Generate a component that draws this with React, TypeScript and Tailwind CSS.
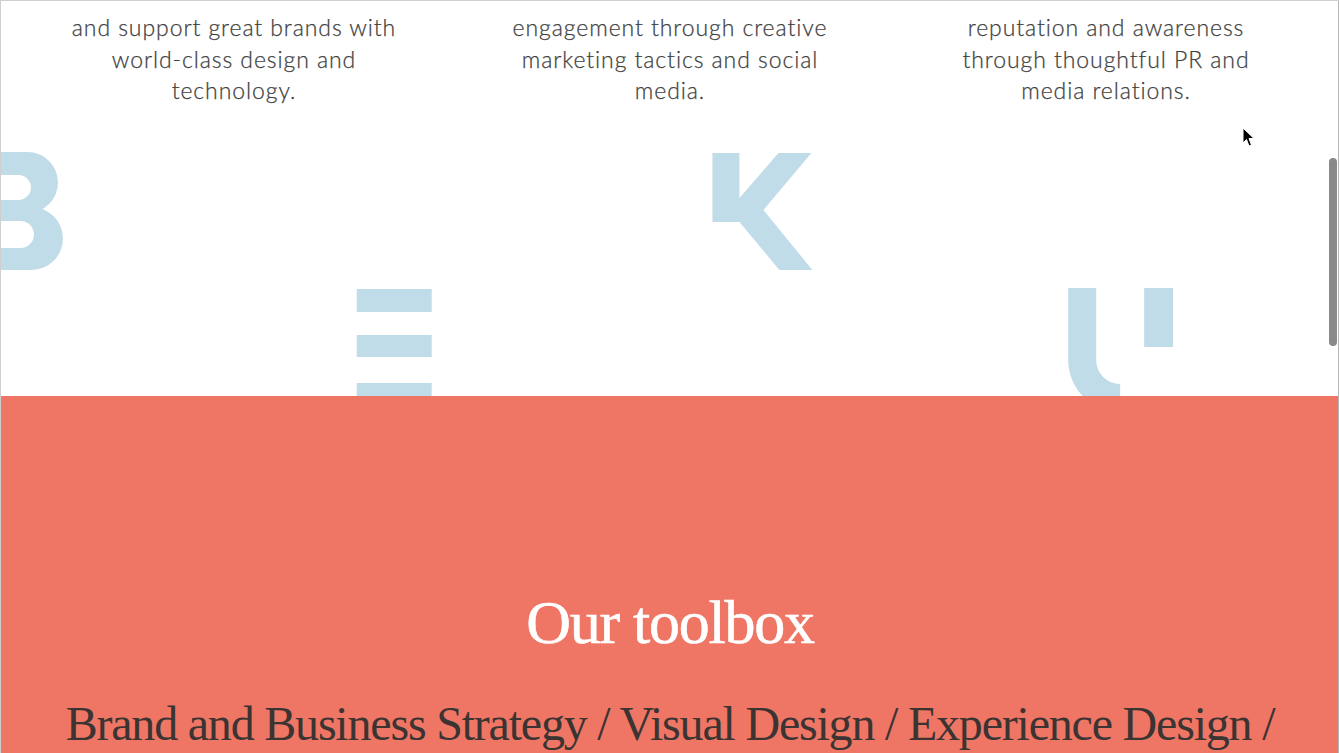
const COLUMNS = [
  ['and support great brands with', 'world-class design and', 'technology.'],
  ['engagement through creative', 'marketing tactics and social', 'media.'],
  ['reputation and awareness', 'through thoughtful PR and', 'media relations.'],
];

const BLUE = '#c0dce9';

function Letters() {
  // viewBox uses page coordinates (top of svg sits at y=110)
  return (
    <svg className="block w-full h-[286px] shrink-0" viewBox="0 110 1339 286" preserveAspectRatio="none">
      {/* B, left part outside the page */}
      <path d="M-40 152 H26.5 A30.5 30.5 0 0 1 26.5 213 H-40 Z" fill={BLUE} />
      <path d="M-40 207 H30.5 A31.5 31.5 0 0 1 30.5 270 H-40 Z" fill={BLUE} />
      <path d="M-10 175 H17.5 A12.5 12.5 0 0 1 17.5 200 H-10 Z" fill="#fff" />
      <path d="M-10 221 H19.5 A13.5 13.5 0 0 1 19.5 248 H-10 Z" fill="#fff" />
      {/* E bars */}
      <rect x="356" y="289" width="75" height="23" fill={BLUE} />
      <rect x="356" y="335" width="75" height="22" fill={BLUE} />
      <rect x="356" y="383" width="75" height="22" fill={BLUE} />
      {/* K */}
      <polygon
        points="712,153 739,153 739,198 778,153 811,153 763,210 812,270 779,270 739,222 712,222"
        fill={BLUE}
      />
      {/* U */}
      <path d="M1068 288 H1096 V360 A24 24 0 0 0 1120 384 V412 A52 52 0 0 1 1068 360 Z" fill={BLUE} />
      <rect x="1144" y="288" width="29" height="59" fill={BLUE} />
    </svg>
  );
}

export default function App() {
  return (
    <div className="relative h-[753px] w-full overflow-hidden bg-white border-t border-l border-[#cfcfcf]">
      <section className="h-[395px] flex flex-col overflow-hidden">
        <div className="h-[109px] w-[1308px] mx-auto grid grid-cols-3 pt-[11px] shrink-0">
          {COLUMNS.map((lines, i) => (
            <p
              key={i}
              className="text-center text-[23px] font-light leading-[31.5px] text-[#3f3f3f] tracking-[0.04em] [-webkit-text-stroke:0.25px_#3f3f3f]"
              style={{ fontFamily: 'Lato, "Open Sans", sans-serif' }}
            >
              {lines.map((l) => (
                <span key={l} className="block">{l}</span>
              ))}
            </p>
          ))}
        </div>
        <Letters />
      </section>

      <section className="bg-[#ef7664] h-[400px] flex flex-col items-center pt-[190px]">
        <h2
          className="text-white text-[62px] leading-[72px] tracking-[-0.02em] [-webkit-text-stroke:0.6px_#fff]"
          style={{ fontFamily: '"Liberation Serif", serif' }}
        >
          Our toolbox
        </h2>
        <p
          className="mt-[36px] text-[#3b3433] text-[48px] leading-[60px] tracking-[-0.025em] whitespace-nowrap"
          style={{ fontFamily: '"Liberation Serif", serif' }}
        >
          Brand and Business Strategy / Visual Design / Experience Design /
        </p>
      </section>

      {/* overlay scrollbar */}
      <div className="absolute right-0 top-0 h-full w-[1px] bg-[#b5b5b5]" />
      <div className="absolute right-[2px] top-[157px] h-[188px] w-[8px] rounded-full bg-[#8a8a8a]" />

      {/* mouse cursor */}
      <svg className="absolute left-[1241px] top-[126px]" width="14" height="22" viewBox="0 0 14 22">
        <path d="M1 1 L1 16 L4.5 12.5 L7 19 L9.5 18 L7 11.5 L12 11.5 Z" fill="#000" stroke="#fff" strokeWidth="1" />
      </svg>
    </div>
  );
}
